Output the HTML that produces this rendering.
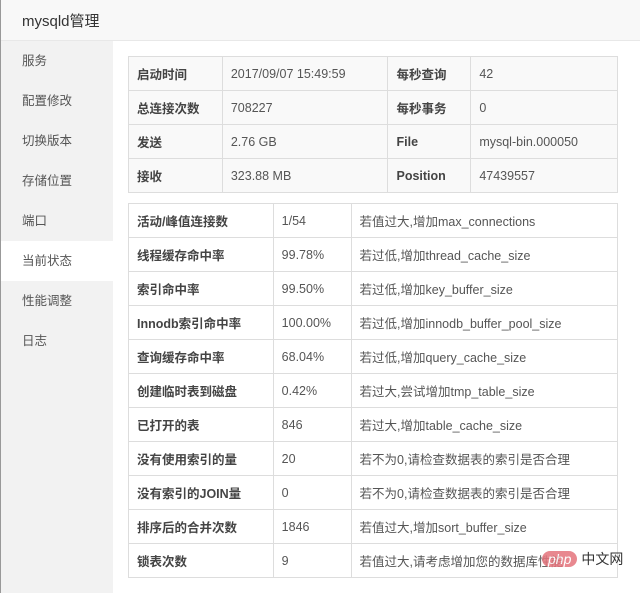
<!DOCTYPE html>
<html><head><meta charset="utf-8"><style>
*{margin:0;padding:0;box-sizing:border-box}
body{width:640px;height:593px;overflow:hidden;background:#fff;font-family:"Liberation Sans","Noto Sans CJK SC",sans-serif;font-size:12.5px;color:#555;position:relative;border-left:1px solid #999}
.hd{position:absolute;left:0;top:0;width:640px;height:41px;background:#f8f8f8;border-bottom:1px solid #e8e8e8;font-size:15px;color:#333;padding:10px 0 0 21px}
.sb{position:absolute;left:0;top:41px;width:112px;height:552px;background:#f2f2f2}
.sb div{height:40px;line-height:40px;padding-left:21px;color:#555;font-size:12.5px}
.sb .on{background:#fff}
table{position:absolute;left:127px;width:490px;border-collapse:collapse}
td{border:1px solid #ddd;height:34px;padding:0 8px;white-space:nowrap;overflow:hidden}
td.l{font-weight:bold;color:#444}
#t1{top:56px;background:#f9f9f9}
#t2{top:203px}
.wm{position:absolute;left:541px;top:549px;font-size:14px;color:#333}
.wm span{display:inline-block;background:#e4747c;color:#fff;border-radius:10px;padding:0 6px;font-style:italic;margin-right:4px;opacity:.85}
</style></head><body>
<div class="hd">mysqld管理</div>
<div class="sb">
<div>服务</div><div>配置修改</div><div>切换版本</div><div>存储位置</div><div>端口</div><div class="on">当前状态</div><div>性能调整</div><div>日志</div>
</div>
<table id="t1">
<colgroup><col style="width:94px"><col style="width:166px"><col style="width:83px"><col style="width:147px"></colgroup>
<tr><td class="l">启动时间</td><td>2017/09/07 15:49:59</td><td class="l">每秒查询</td><td>42</td></tr>
<tr><td class="l">总连接次数</td><td>708227</td><td class="l">每秒事务</td><td>0</td></tr>
<tr><td class="l">发送</td><td>2.76 GB</td><td class="l">File</td><td>mysql-bin.000050</td></tr>
<tr><td class="l">接收</td><td>323.88 MB</td><td class="l">Position</td><td>47439557</td></tr>
</table>
<table id="t2">
<colgroup><col style="width:145px"><col style="width:78px"><col style="width:267px"></colgroup>
<tr><td class="l">活动/峰值连接数</td><td>1/54</td><td>若值过大,增加max_connections</td></tr>
<tr><td class="l">线程缓存命中率</td><td>99.78%</td><td>若过低,增加thread_cache_size</td></tr>
<tr><td class="l">索引命中率</td><td>99.50%</td><td>若过低,增加key_buffer_size</td></tr>
<tr><td class="l">Innodb索引命中率</td><td>100.00%</td><td>若过低,增加innodb_buffer_pool_size</td></tr>
<tr><td class="l">查询缓存命中率</td><td>68.04%</td><td>若过低,增加query_cache_size</td></tr>
<tr><td class="l">创建临时表到磁盘</td><td>0.42%</td><td>若过大,尝试增加tmp_table_size</td></tr>
<tr><td class="l">已打开的表</td><td>846</td><td>若过大,增加table_cache_size</td></tr>
<tr><td class="l">没有使用索引的量</td><td>20</td><td>若不为0,请检查数据表的索引是否合理</td></tr>
<tr><td class="l">没有索引的JOIN量</td><td>0</td><td>若不为0,请检查数据表的索引是否合理</td></tr>
<tr><td class="l">排序后的合并次数</td><td>1846</td><td>若值过大,增加sort_buffer_size</td></tr>
<tr><td class="l">锁表次数</td><td>9</td><td>若值过大,请考虑增加您的数据库性能</td></tr>
</table>
<div class="wm"><span>php</span>中文网</div>
</body></html>
